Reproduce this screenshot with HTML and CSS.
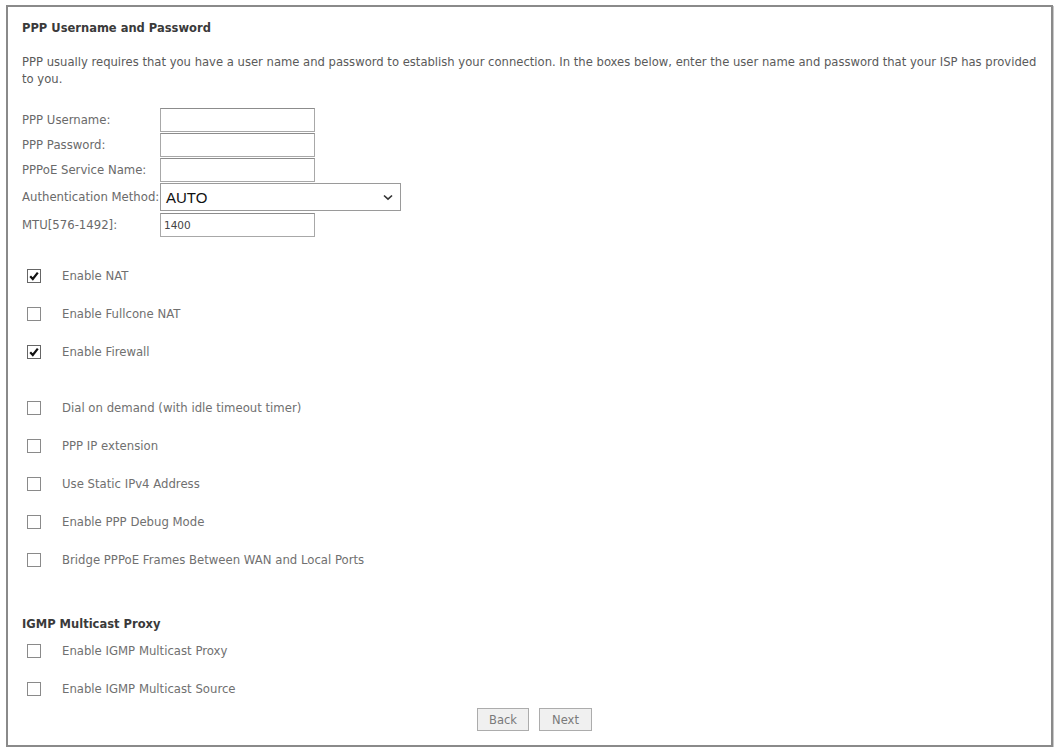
FILE: index.html
```html
<!DOCTYPE html>
<html lang="en">
<head>
    <meta charset="UTF-8">
    <title>WAN Service - PPP</title>
    <link rel="stylesheet" href="styles.css">
</head>
<body>
    <div class="panel">
        <h2 class="title">PPP Username and Password</h2>
        <p class="intro">
            PPP usually requires that you have a user name and password to establish your connection. In the boxes below, enter the user name and password that your ISP has provided to you.
        </p>

        <div class="fields">
            <div class="field">
                <label class="field-label">PPP Username:</label>
                <span class="input"></span>
            </div>
            <div class="field">
                <label class="field-label">PPP Password:</label>
                <span class="input"></span>
            </div>
            <div class="field">
                <label class="field-label">PPPoE Service Name:</label>
                <span class="input"></span>
            </div>
            <div class="field field-select">
                <label class="field-label">Authentication Method:</label>
                <span class="select">
                    <span class="select-value">AUTO</span>
                    <svg class="chevron" width="10" height="7" viewBox="0 0 10 7">
                        <path d="M1 1.5 L5 5.2 L9 1.5" fill="none" stroke="#333" stroke-width="1.6"/>
                    </svg>
                </span>
            </div>
            <div class="field">
                <label class="field-label">MTU[576-1492]:</label>
                <span class="input input-text">1400</span>
            </div>
        </div>

        <div class="checks">
            <div class="check"><span class="box checked"></span><span>Enable NAT</span></div>
            <div class="check"><span class="box"></span><span>Enable Fullcone NAT</span></div>
            <div class="check"><span class="box checked"></span><span>Enable Firewall</span></div>
        </div>

        <div class="checks">
            <div class="check"><span class="box"></span><span>Dial on demand (with idle timeout timer)</span></div>
            <div class="check"><span class="box"></span><span>PPP IP extension</span></div>
            <div class="check"><span class="box"></span><span>Use Static IPv4 Address</span></div>
            <div class="check"><span class="box"></span><span>Enable PPP Debug Mode</span></div>
            <div class="check"><span class="box"></span><span>Bridge PPPoE Frames Between WAN and Local Ports</span></div>
        </div>

        <h3 class="subtitle">IGMP Multicast Proxy</h3>
        <div class="checks checks-tight">
            <div class="check"><span class="box"></span><span>Enable IGMP Multicast Proxy</span></div>
            <div class="check"><span class="box"></span><span>Enable IGMP Multicast Source</span></div>
        </div>

        <div class="actions">
            <button class="btn btn-back">Back</button>
            <button class="btn btn-next">Next</button>
        </div>
    </div>
</body>
</html>
```

FILE: styles.css
```css
body {
    margin: 0;
    background: #fff;
    font-family: 'DejaVu Sans', Tahoma, sans-serif;
    color: #555;
}

.panel {
    box-sizing: border-box;
    margin: 5px 1px 0 6px;
    height: 742px;
    padding: 14px 8px 0 14px;
    border: 2px solid #8a8a8a;
    box-shadow: 1px 1px 0 #c8c8c8;
}

.title {
    margin: 0;
    font-size: 11.5px;
    line-height: 14px;
    font-weight: bold;
    color: #3a3a3a;
}

.intro {
    margin: 19px 0 0;
    font-size: 11.6px;
    line-height: 17px;
    color: #5a5a5a;
}

.fields {
    margin-top: 19px;
    display: flex;
    flex-direction: column;
}

.field {
    display: flex;
    align-items: center;
    height: 25px;
}

.field-select {
    height: 30px;
}

.field-label {
    width: 138px;
    font-size: 11.7px;
    color: #6a6a6a;
    white-space: nowrap;
}

.input {
    box-sizing: border-box;
    width: 155px;
    height: 24px;
    border: 1px solid #a8a8a8;
    border-top-color: #8c8c8c;
    background: #fff;
}

.input-text {
    display: flex;
    align-items: center;
    padding-left: 3px;
    font-size: 10.5px;
    color: #444;
}

.select {
    box-sizing: border-box;
    width: 241px;
    height: 28px;
    display: flex;
    align-items: center;
    justify-content: space-between;
    padding: 0 7px 0 5px;
    border: 1px solid #9a9a9a;
    background: #fff;
}

.select-value {
    font-family: 'Liberation Sans', Arial, sans-serif;
    font-size: 15px;
    color: #111;
}

.checks {
    margin-top: 20px;
    display: flex;
    flex-direction: column;
}

.checks + .checks {
    margin-top: 18px;
}

.checks-tight {
    margin-top: 1px;
}

.check {
    display: flex;
    align-items: center;
    height: 38px;
    padding-left: 5px;
    font-size: 11.7px;
    color: #707070;
}

.box {
    box-sizing: border-box;
    width: 14px;
    height: 14px;
    margin-right: 21px;
    border: 1px solid #8a8a8a;
    background: #fff center / 12px 12px no-repeat;
}

.box.checked {
    border-color: #666;
    background-image: url("data:image/svg+xml,%3Csvg xmlns='http://www.w3.org/2000/svg' viewBox='0 0 12 12'%3E%3Cpath d='M2.2 6.2 L4.8 9 L9.8 2.6' fill='none' stroke='%23111' stroke-width='2.2'/%3E%3C/svg%3E");
}

.subtitle {
    margin: 38px 0 0;
    font-size: 11.5px;
    line-height: 14px;
    font-weight: bold;
    color: #3a3a3a;
}

.actions {
    margin-top: 0;
    display: flex;
    justify-content: center;
    gap: 10px;
    padding-left: 4px;
}

.btn {
    height: 23px;
    padding: 0;
    border: 1px solid #acacac;
    background: #f0f0f0;
    font-family: 'DejaVu Sans', Tahoma, sans-serif;
    font-size: 11.5px;
    color: #7a7a7a;
}

.btn-back {
    width: 52px;
}

.btn-next {
    width: 53px;
}
```
